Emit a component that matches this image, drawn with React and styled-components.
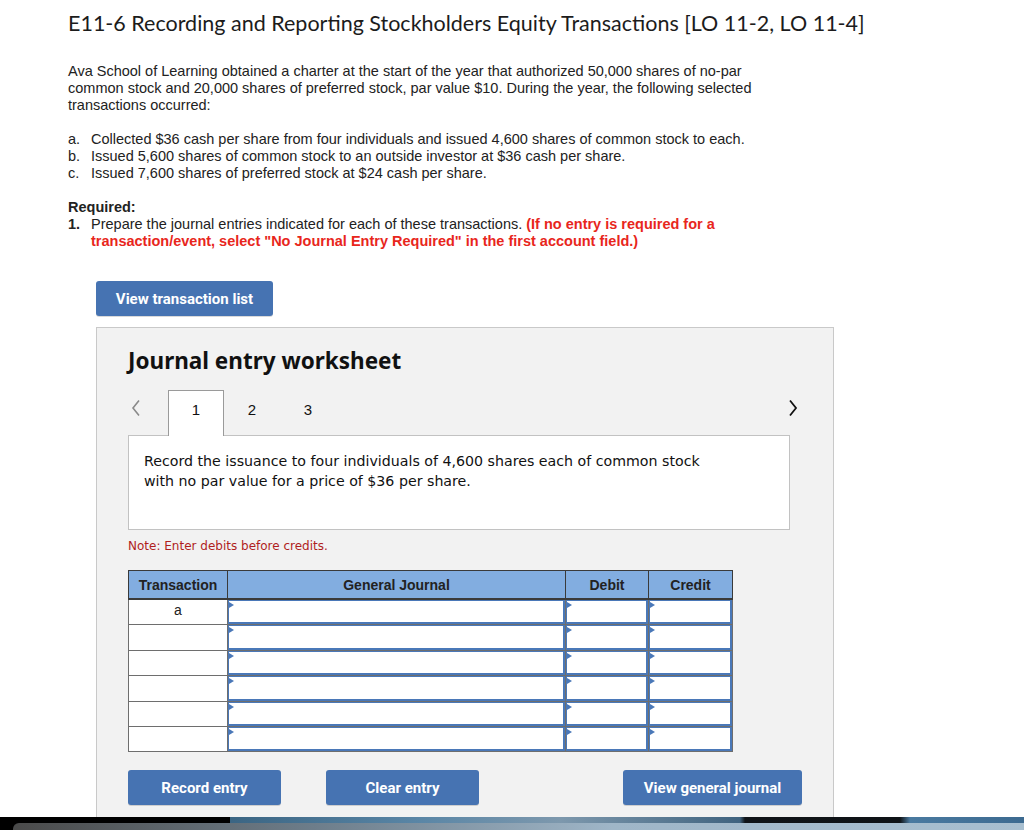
import styled, { createGlobalStyle } from "styled-components";

const GlobalStyle = createGlobalStyle`
  html, body {
    margin: 0;
    padding: 0;
    background: #ffffff;
    overflow: hidden;
  }
  body {
    font-family: "Liberation Sans", Arial, sans-serif;
    color: #222;
  }
`;

const rows = ["a", "", "", "", "", ""];

const App = () => {
  return (
    <>
      <GlobalStyle />
      <Page>
        <Title>
          E11-6 Recording and Reporting Stockholders Equity Transactions [LO
          11-2, LO 11-4]
        </Title>

        <Para>
          Ava School of Learning obtained a charter at the start of the year
          that authorized 50,000 shares of no-par common stock and 20,000
          shares of preferred stock, par value $10. During the year, the
          following selected transactions occurred:
        </Para>

        <List>
          <Item>
            <Marker>a.</Marker>
            <span>
              Collected $36 cash per share from four individuals and issued
              4,600 shares of common stock to each.
            </span>
          </Item>
          <Item>
            <Marker>b.</Marker>
            <span>
              Issued 5,600 shares of common stock to an outside investor at $36
              cash per share.
            </span>
          </Item>
          <Item>
            <Marker>c.</Marker>
            <span>Issued 7,600 shares of preferred stock at $24 cash per share.</span>
          </Item>
        </List>

        <Required>Required:</Required>
        <Item>
          <Marker $bold>1.</Marker>
          <RequiredText>
            Prepare the journal entries indicated for each of these
            transactions.{" "}
            <Warn>
              (If no entry is required for a transaction/event, select "No
              Journal Entry Required" in the first account field.)
            </Warn>
          </RequiredText>
        </Item>

        <TopButton>View transaction list</TopButton>

        <Panel>
          <PanelTitle>Journal entry worksheet</PanelTitle>

          <TabRow>
            <Arrow $muted>
              <svg width="10" height="18" viewBox="0 0 10 18">
                <path d="M8 1.5 L2 9 L8 16.5" fill="none" stroke="#8a8a8a" strokeWidth="1.6" />
              </svg>
            </Arrow>
            <Tab $active>1</Tab>
            <Tab>2</Tab>
            <Tab>3</Tab>
            <Spacer />
            <Arrow>
              <svg width="10" height="18" viewBox="0 0 10 18">
                <path d="M2 1.5 L8 9 L2 16.5" fill="none" stroke="#111" strokeWidth="1.8" />
              </svg>
            </Arrow>
          </TabRow>

          <EntryBox>
            Record the issuance to four individuals of 4,600 shares each of
            common stock with no par value for a price of $36 per share.
          </EntryBox>

          <Note>Note: Enter debits before credits.</Note>

          <Journal>
            <colgroup>
              <col style={{ width: 99 }} />
              <col style={{ width: 338 }} />
              <col style={{ width: 83 }} />
              <col style={{ width: 84 }} />
            </colgroup>
            <thead>
              <tr>
                <Head>Transaction</Head>
                <Head>General Journal</Head>
                <Head>Debit</Head>
                <Head>Credit</Head>
              </tr>
            </thead>
            <tbody>
              {rows.map((r, i) => (
                <tr key={i}>
                  <TxCell>{r}</TxCell>
                  <InputCell>
                    <InputBox />
                  </InputCell>
                  <InputCell>
                    <InputBox />
                  </InputCell>
                  <InputCell>
                    <InputBox />
                  </InputCell>
                </tr>
              ))}
            </tbody>
          </Journal>

          <ButtonRow>
            <ActionButton $w={153}>Record entry</ActionButton>
            <ActionButton $w={153}>Clear entry</ActionButton>
            <ActionButton $w={179} $push>
              View general journal
            </ActionButton>
          </ButtonRow>
        </Panel>
      </Page>
      <Dock>
        <DockShelf />
      </Dock>
    </>
  );
};

export default App;

const Page = styled.div`
  padding: 11px 0 0 68px;
  height: 817px;
  box-sizing: border-box;
  overflow: hidden;
`;

const Title = styled.h1`
  margin: 0 0 28px;
  font-family: Lato, "Open Sans", sans-serif;
  font-weight: 400;
  font-size: 21.5px;
  line-height: 24px;
  color: #1c1c1c;
`;

const Para = styled.p`
  margin: 0 0 17px;
  max-width: 700px;
  font-size: 14.5px;
  line-height: 17px;
`;

const List = styled.div`
  margin-bottom: 17px;
`;

const Item = styled.div`
  display: flex;
  font-size: 14.5px;
  line-height: 17px;
`;

const Marker = styled.span`
  width: 23px;
  flex: none;
  font-weight: ${(p) => (p.$bold ? 700 : 400)};
`;

const Required = styled.div`
  font-size: 14.5px;
  line-height: 17px;
  font-weight: 700;
`;

const RequiredText = styled.span`
  max-width: 650px;
`;

const Warn = styled.span`
  color: #e8261c;
  font-weight: 700;
`;

const BlueButton = styled.button`
  border: none;
  border-radius: 3px;
  background: #4673b2;
  color: #fff;
  font-family: Roboto, sans-serif;
  font-weight: 700;
  font-size: 15px;
  height: 35px;
  padding: 0;
  cursor: pointer;
  box-shadow: 0 1px 0 rgba(0, 0, 0, 0.15);
`;

const TopButton = styled(BlueButton)`
  display: block;
  margin: 31px 0 0 28px;
  width: 177px;
`;

const Panel = styled.div`
  margin: 11px 0 0 28px;
  width: 738px;
  box-sizing: border-box;
  background: #f2f2f2;
  border: 1px solid #c9c9c9;
  border-bottom: none;
  padding: 20px 0 20px 31px;
`;

const PanelTitle = styled.h2`
  margin: 0;
  font-family: "Noto Sans", "Open Sans", sans-serif;
  font-weight: 700;
  font-size: 22.5px;
  line-height: 26px;
  color: #111;
`;

const TabRow = styled.div`
  display: flex;
  align-items: flex-end;
  width: 673px;
  height: 46px;
  margin-top: 15px;
`;

const Arrow = styled.div`
  width: ${(p) => (p.$muted ? "40px" : "auto")};
  height: 46px;
  display: flex;
  align-items: center;
  justify-content: ${(p) => (p.$muted ? "flex-start" : "flex-end")};
  padding-left: ${(p) => (p.$muted ? "3px" : "0")};
  padding-right: ${(p) => (p.$muted ? "0" : "3px")};
  padding-bottom: 8px;
  box-sizing: border-box;
`;

const Spacer = styled.div`
  flex: 1;
`;

const Tab = styled.div`
  width: 56px;
  height: 46px;
  box-sizing: border-box;
  display: flex;
  align-items: center;
  justify-content: center;
  padding-bottom: 8px;
  font-size: 15px;
  color: #111;
  position: relative;
  z-index: 1;
  background: ${(p) => (p.$active ? "#fff" : "transparent")};
  border: 1px solid ${(p) => (p.$active ? "#9a9a9a" : "transparent")};
  border-bottom: none;
  margin-bottom: -1px;
`;

const EntryBox = styled.div`
  width: 662px;
  height: 95px;
  box-sizing: border-box;
  background: #fff;
  border: 1px solid #c2c2c2;
  padding: 15px 75px 0 15px;
  font-family: "DejaVu Sans", Verdana, sans-serif;
  font-size: 14.2px;
  line-height: 20px;
  color: #111;
`;

const Note = styled.div`
  margin-top: 8px;
  font-family: "DejaVu Sans", Verdana, sans-serif;
  font-size: 12px;
  line-height: 16px;
  color: #b01e1e;
`;

const Journal = styled.table`
  margin-top: 16px;
  width: 604px;
  border-collapse: collapse;
  table-layout: fixed;
`;

const Head = styled.th`
  height: 27px;
  padding: 0;
  background: #82ade0;
  border: 1px solid #3a3a3a;
  border-bottom-width: 2px;
  font-size: 14px;
  font-weight: 700;
  color: #222;
  text-align: center;
`;

const TxCell = styled.td`
  height: 24.4px;
  padding: 0 0 4px;
  box-sizing: border-box;
  background: #fff;
  border: 1px solid #6e6e6e;
  font-size: 14px;
  text-align: center;
  vertical-align: middle;
`;

const InputCell = styled.td`
  height: 24.4px;
  padding: 0;
  border: 1px solid #6e6e6e;
  background: #dfe7f2;
  vertical-align: top;
`;

const InputBox = styled.div`
  position: relative;
  height: 24.4px;
  box-sizing: border-box;
  background: #fff;
  border: 1px solid #4a78b8;
  border-width: 1px 2px 2px 1px;

  &::before {
    content: "";
    position: absolute;
    left: 0;
    top: 1px;
    border-left: 5px solid #4a78b8;
    border-top: 3.5px solid transparent;
    border-bottom: 3.5px solid transparent;
  }
`;

const ButtonRow = styled.div`
  display: flex;
  width: 674px;
  margin-top: 18px;
  gap: 45px;
`;

const ActionButton = styled(BlueButton)`
  width: ${(p) => p.$w}px;
  margin-left: ${(p) => (p.$push ? "auto" : "0")};
`;

const Dock = styled.div`
  height: 13px;
  background: linear-gradient(
    to right,
    #000 0,
    #000 230px,
    #3b6583 230px,
    #5a86a6 420px,
    #7d98ad 560px,
    #40637f 740px,
    #101418 745px,
    #0f1317 900px,
    #4a7aa0 910px,
    #3c6a90 1024px
  );
  padding: 6px 0 0 13px;
  box-sizing: border-box;
`;

const DockShelf = styled.div`
  height: 100%;
  border-radius: 6px 0 0 0;
  background: linear-gradient(to right, #4a4a4a, #6d7d8a 300px, #9fb6c8 600px, #a8bfd0);
`;
